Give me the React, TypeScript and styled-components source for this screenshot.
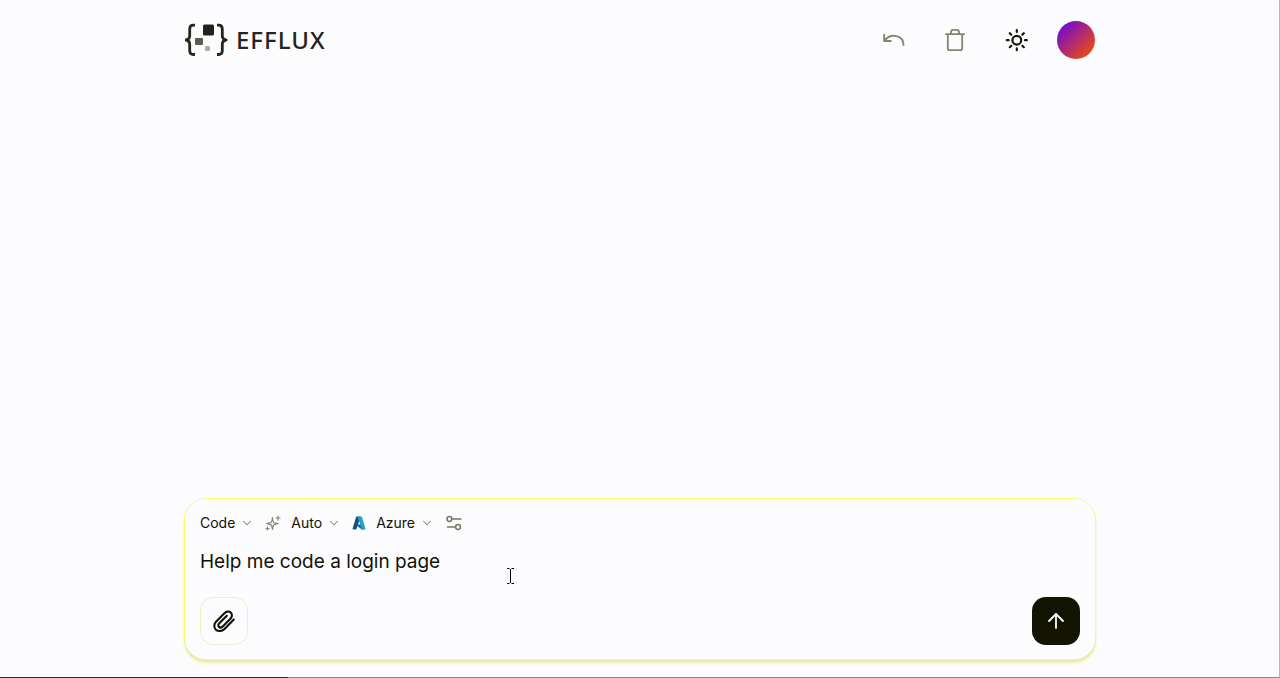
import React, { useState } from "react";
import styled, { createGlobalStyle } from "styled-components";
import { ArrowUp, ChevronDown } from "lucide-react";

const GlobalStyle = createGlobalStyle`
  *, *::before, *::after { box-sizing: border-box; }
  body {
    margin: 0;
    background: #fcfcff;
    color: #111104;
    font-family: Inter, "Liberation Sans", sans-serif;
  }
  button, select, textarea { font: inherit; color: inherit; }
`;

const Page = styled.div`
  display: flex;
  flex-direction: column;
  align-items: center;
  min-height: 100vh;
  padding: 0 15px 17px 16px;
  border-right: 1px solid #b4b4be;
  border-bottom: 1px solid #85858f;
`;

const Header = styled.header`
  display: flex;
  align-items: center;
  justify-content: space-between;
  width: 100%;
  max-width: 912px;
  height: 80px;
  padding: 0 1px;
`;

const Brand = styled.a`
  display: flex;
  align-items: center;
  gap: 8px;
  color: #25251d;
  text-decoration: none;
`;

const BrandName = styled.span`
  font-family: "Noto Sans", sans-serif;
  font-size: 24px;
  line-height: 32px;
  font-weight: 550;
  letter-spacing: 1px;
`;

const Actions = styled.nav`
  display: flex;
  align-items: center;
  gap: 21px;
`;

const IconButton = styled.button<{ $muted?: boolean }>`
  display: flex;
  align-items: center;
  justify-content: center;
  width: 40px;
  height: 40px;
  padding: 0;
  border: 0;
  background: transparent;
  color: ${(p) => (p.$muted ? "#85856c" : "#151508")};
  cursor: pointer;
`;

const Avatar = styled.button`
  width: 38px;
  height: 38px;
  padding: 0;
  border: 0;
  border-radius: 50%;
  background: linear-gradient(135deg, #6a0ad8 10%, #b32a70 50%, #f05008 92%);
`;

const Conversation = styled.main`
  flex: 1;
  width: 100%;
`;

const Composer = styled.form`
  position: relative;
  display: flex;
  flex-direction: column;
  width: 100%;
  max-width: 912px;
  padding: 14px 15px;
  border: 1px dotted #eaea50;
  border-radius: 22px;
  background: #fcfcff;
  box-shadow: 0 2px 1px #e9e9b4, 0 4px 3px #f4f4c4;
`;

const Options = styled.div`
  display: flex;
  align-items: center;
  height: 20px;
`;

const Picker = styled.label<{ $gap: number }>`
  display: flex;
  align-items: center;
  margin-right: ${(p) => p.$gap}px;
  color: #85856c;
`;

const PickerIcon = styled.span`
  display: flex;
  margin-right: 10px;
`;

const Select = styled.select`
  field-sizing: content;
  appearance: none;
  margin: 0 5px 0 0;
  padding: 0;
  border: 0;
  background: transparent;
  color: #111104;
  font-size: 14px;
  line-height: 20px;
`;

const SettingsButton = styled.button`
  display: flex;
  padding: 0;
  border: 0;
  background: transparent;
  color: #77775e;
`;

const Prompt = styled.textarea`
  display: block;
  width: 100%;
  height: 48px;
  margin: 15px 0 1px;
  padding: 0;
  border: 0;
  outline: 0;
  resize: none;
  background: transparent;
  font-size: 19px;
  line-height: 28px;
`;

const Footer = styled.div`
  display: flex;
  align-items: center;
  justify-content: space-between;
`;

const SquareButton = styled.button<{ $filled?: boolean }>`
  display: flex;
  align-items: center;
  justify-content: center;
  width: 48px;
  height: 48px;
  padding: 0;
  border: ${(p) => (p.$filled ? "0" : "1px dotted #e2e27c")};
  border-radius: 14px;
  background: ${(p) => (p.$filled ? "#141403" : "transparent")};
  color: ${(p) => (p.$filled ? "#fcfcff" : "#111104")};
`;

const Pointer = styled.svg`
  position: absolute;
  left: 321px;
  top: 69px;
  pointer-events: none;
`;

const LoadBar = styled.div`
  position: fixed;
  left: 0;
  bottom: 0;
  width: 288px;
  height: 1px;
  background: #2d2938;
`;

const BrandMark = () => (
  <svg width="43" height="34" viewBox="0 0 43 34" fill="none" aria-hidden="true">
    <g stroke="currentColor" strokeWidth="2.8" strokeLinejoin="round">
      <path d="M10 2.2H8.5Q4.7 2.2 4.7 6V12.5Q4.7 16.5 0.8 17Q4.7 17.5 4.7 21.5V27.5Q4.7 31.5 8.5 31.5H10" />
      <path d="M32 2.2H33.5Q37.3 2.2 37.3 6V12.5Q37.3 16.5 41.2 17Q37.3 17.5 37.3 21.5V27.5Q37.3 31.5 33.5 31.5H32" />
    </g>
    <rect x="18" y="1.5" width="11" height="11" rx="1.5" fill="#22221a" />
    <rect x="10" y="15" width="8" height="7" rx="1" fill="#5b5b50" />
    <rect x="20" y="23" width="5" height="5" rx="1.5" fill="#aaaa9f" />
  </svg>
);

const UndoIcon = () => (
  <svg width="22" height="22" viewBox="0 0 22 22" fill="none" stroke="currentColor" strokeWidth="1.9" strokeLinecap="round" strokeLinejoin="round" aria-hidden="true">
    <path d="M1.2 5.6V12H7.8M1.8 11.5C8 3.5 20.5 6.5 20.5 16" />
  </svg>
);

const TrashIcon = () => (
  <svg width="22" height="24" viewBox="0 0 22 24" fill="none" stroke="currentColor" strokeWidth="1.8" strokeLinecap="round" strokeLinejoin="round" aria-hidden="true">
    <path d="M2 6.2H20M3.8 6.2V20.2Q3.8 22.2 5.8 22.2H16.2Q18.2 22.2 18.2 20.2V6.2M7 6V4.2Q7 1.8 9.2 1.8H12.8Q15 1.8 15 4.2V6" />
  </svg>
);

const SunIcon = () => (
  <svg width="24" height="24" viewBox="0 0 24 24" fill="none" stroke="currentColor" strokeWidth="2.2" strokeLinecap="round" aria-hidden="true">
    <circle cx="12.8" cy="12.2" r="4.4" />
    <path d="M12.8 2.2v1.8M12.8 20.4V22.2M2.8 12.2h1.8M21 12.2H22.8M5.8 5.2l1.4 1.4M18.4 17.8L19.8 19.2M5.8 19.2l1.4-1.4M18.4 6.6L19.8 5.2" />
  </svg>
);

const SparklesIcon = () => (
  <svg width="16" height="16" viewBox="0 0 16 16" fill="none" stroke="currentColor" strokeWidth="1.2" strokeLinecap="round" strokeLinejoin="round" aria-hidden="true">
    <path d="M7.5 2.5Q8 7.6 9.3 7.9L13 8.5L9.3 9.6Q8.1 10 7.5 14.3Q6.8 10 5.8 9.6L1.5 8.5L5.8 7.6Q6.9 7.2 7.5 2.5ZM13 1v4M11 3h4M2.5 12v3M1 13.5h3" />
  </svg>
);

const AzureIcon = () => (
  <svg width="14" height="14" viewBox="0 0 14 14" aria-hidden="true">
    <path d="M4.6 0.6H8.6L4.6 12.7Q4.3 13.4 3.6 13.4H1.3Q0.3 13.4 0.6 12.4L4 1.2Q4.1 0.6 4.6 0.6Z" fill="#17507e" />
    <path d="M5.2 8.6H10.4L11.4 13.4H9.8L4.6 9.5Z" fill="#12689f" />
    <path d="M5.2 0.6H9.2Q9.8 0.6 10 1.2L13.4 12.4Q13.7 13.4 12.7 13.4H9.2Q9.8 13 9.5 12.3L5.8 1.2Q5.6 0.6 5.2 0.6Z" fill="#27a0c4" />
  </svg>
);

const SettingsIcon = () => (
  <svg width="16" height="16" viewBox="0 0 16 16" fill="none" stroke="currentColor" strokeWidth="1.5" strokeLinecap="round" aria-hidden="true">
    <circle cx="3.4" cy="4" r="2.4" />
    <circle cx="12" cy="12" r="2.4" />
    <path d="M6 4h9M1.5 12h8" />
  </svg>
);

const PaperclipIcon = () => (
  <svg width="24" height="24" viewBox="0 0 24 24" fill="none" stroke="currentColor" strokeWidth="2.1" strokeLinecap="round" strokeLinejoin="round" aria-hidden="true">
    <path d="M21.8 10.6L12.5 19.9C9.9 22.5 6.1 22.7 3.9 20.7C1.5 18.5 1.9 14.9 4.2 12.5L12.4 4.3C14.2 2.5 17 2 18.7 3.5C20.5 5.2 20.2 7.9 18.4 9.7L10.7 17.4C9.5 18.6 8 18.8 7 17.9C5.9 16.9 6.2 15.3 7.3 14.2L14.8 6.8" />
  </svg>
);

const pickers = [
  { label: "Mode", value: "Code", icon: null, gap: 11 },
  { label: "Template", value: "Auto", icon: <SparklesIcon />, gap: 11 },
  { label: "Provider", value: "Azure", icon: <AzureIcon />, gap: 12 },
];

export default function App() {
  const [prompt, setPrompt] = useState("Help me code a login page");
  return (
    <>
      <GlobalStyle />
      <Page>
        <Header>
          <Brand href="#" aria-label="Efflux">
            <BrandMark />
            <BrandName>EFFLUX</BrandName>
          </Brand>
          <Actions>
            <IconButton $muted aria-label="Undo"><UndoIcon /></IconButton>
            <IconButton $muted aria-label="Clear chat"><TrashIcon /></IconButton>
            <IconButton aria-label="Toggle theme"><SunIcon /></IconButton>
            <Avatar aria-label="Account" />
          </Actions>
        </Header>
        <Conversation />
        <Composer onSubmit={(e) => e.preventDefault()}>
          <Options>
            {pickers.map((p) => (
              <Picker key={p.label} $gap={p.gap}>
                {p.icon && <PickerIcon>{p.icon}</PickerIcon>}
                <Select aria-label={p.label} defaultValue={p.value}>
                  <option>{p.value}</option>
                </Select>
                <ChevronDown size={14} strokeWidth={1.8} />
              </Picker>
            ))}
            <SettingsButton type="button" aria-label="Model settings"><SettingsIcon /></SettingsButton>
          </Options>
          <Prompt aria-label="Prompt" value={prompt} onChange={(e) => setPrompt(e.target.value)} />
          <Footer>
            <SquareButton type="button" aria-label="Attach file"><PaperclipIcon /></SquareButton>
            <SquareButton type="submit" $filled aria-label="Send"><ArrowUp size={24} strokeWidth={1.8} /></SquareButton>
          </Footer>
          <Pointer width="9" height="16" viewBox="0 0 9 16" fill="none" stroke="#000" aria-hidden="true">
            <path d="M1 0.5H3.5M5.5 0.5H8M4.5 1V15M1 15.5H3.5M5.5 15.5H8" />
          </Pointer>
        </Composer>
        <LoadBar />
      </Page>
    </>
  );
}
